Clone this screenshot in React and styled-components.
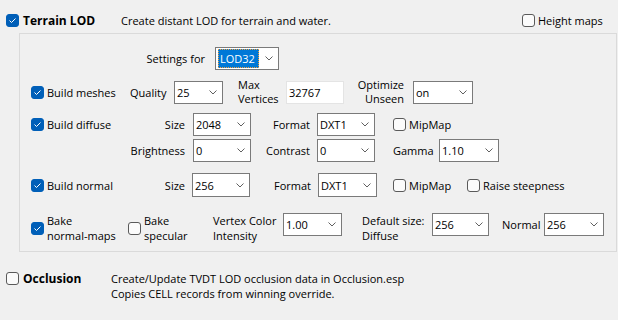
import React from "react";
import styled, { createGlobalStyle } from "styled-components";

const GlobalStyle = createGlobalStyle`
  html, body {
    margin: 0;
    padding: 0;
    background: #f0f0f0;
  }
  body {
    width: 618px;
    height: 320px;
    overflow: hidden;
    font-family: "Open Sans", "Noto Sans", sans-serif;
    font-size: 11px;
    color: #000;
  }
`;

const Page = styled.div`
  padding-top: 13px;
`;

const Row = styled.div`
  display: flex;
  align-items: ${({ $align }) => $align || "center"};
  height: ${({ $h }) => ($h ? `${$h}px` : "auto")};
  margin-top: ${({ $mt }) => $mt || 0}px;
  padding-left: ${({ $pl }) => $pl || 0}px;
`;

const Cap = styled.span`
  flex: none;
  box-sizing: border-box;
  width: ${({ $w }) => ($w ? `${$w}px` : "auto")};
  margin-left: ${({ $ml }) => $ml || 0}px;
  padding-right: ${({ $pr }) => $pr || 0}px;
  text-align: ${({ $right }) => ($right ? "right" : "left")};
  line-height: ${({ $lh }) => $lh || 15}px;
  align-self: ${({ $self }) => $self || "auto"};
  white-space: nowrap;
`;

const Panel = styled.div`
  box-sizing: border-box;
  width: 598px;
  height: 219px;
  margin: 6px 0 0 19px;
  border: 1px solid #dadada;
`;

const CheckWrap = styled.label`
  flex: none;
  display: flex;
  align-items: center;
  gap: ${({ $bold }) => ($bold ? 4 : 3)}px;
  width: ${({ $w }) => ($w ? `${$w}px` : "auto")};
  margin-left: ${({ $ml }) => $ml || 0}px;
  font-weight: ${({ $bold }) => ($bold ? 700 : 400)};
  font-size: ${({ $bold }) => ($bold ? 12 : 11)}px;
  line-height: 15px;
  white-space: nowrap;
`;

const Box = styled.span`
  flex: none;
  box-sizing: border-box;
  width: 13px;
  height: 13px;
  border-radius: 3px;
  border: 1px solid ${({ $on }) => ($on ? "#005fb8" : "#5a5a5a")};
  background: ${({ $on }) => ($on ? "#005fb8" : "#fbfbfb")};
  display: flex;
  align-items: center;
  justify-content: center;
`;

const Check = ({ on, bold, w, ml, children }) => (
  <CheckWrap $bold={bold} $w={w} $ml={ml}>
    <Box $on={on}>
      {on && (
        <svg width="9" height="7" viewBox="0 0 9 7">
          <path d="M1.5 3.5 L3.5 5.5 L7.5 1.5" fill="none" stroke="#fff" strokeWidth="1" />
        </svg>
      )}
    </Box>
    <span>{children}</span>
  </CheckWrap>
);

const ComboBox = styled.div`
  flex: none;
  box-sizing: border-box;
  width: ${({ $w }) => $w}px;
  height: ${({ $h }) => $h || 23}px;
  margin-left: ${({ $ml }) => $ml || 0}px;
  border: 1px solid #7a7a7a;
  background: #fff;
  display: flex;
  align-items: center;
  padding: 0 5px 0 2px;
`;

const ComboValue = styled.span`
  flex: 1;
  line-height: 15px;
  white-space: nowrap;
`;

const Highlight = styled.span`
  box-sizing: border-box;
  display: inline-flex;
  align-items: center;
  width: 41px;
  height: 19px;
  padding-left: 1px;
  background: #0078d7;
  color: #fff;
  border: 1px dotted #f0a040;
`;

const Combo = ({ w, h, ml, value, selected }) => (
  <ComboBox $w={w} $h={h} $ml={ml}>
    <ComboValue>{selected ? <Highlight>{value}</Highlight> : value}</ComboValue>
    <svg width="8" height="5" viewBox="0 0 8 5">
      <path d="M0.5 0.5 L4 4 L7.5 0.5" fill="none" stroke="#606060" strokeWidth="1" />
    </svg>
  </ComboBox>
);

const TextBox = styled.div`
  flex: none;
  box-sizing: border-box;
  width: ${({ $w }) => $w}px;
  height: 23px;
  padding-left: 2px;
  background: #fff;
  border: 1px solid #e4e4e4;
  display: flex;
  align-items: center;
`;

export default function App() {
  return (
    <>
      <GlobalStyle />
      <Page>
        <Row $h={14} $pl={6}>
          <Check on bold w={115}>Terrain LOD</Check>
          <Cap $w={401}>Create distant LOD for terrain and water.</Cap>
          <Check>Height maps</Check>
        </Row>

        <Panel>
          <Row $h={23} $mt={13}>
            <Cap $w={195} $right $pr={10}>Settings for</Cap>
            <Combo w={64} value="LOD32" selected />
          </Row>

          <Row $h={28} $mt={8} $pl={11}>
            <Check on w={99}>Build meshes</Check>
            <Cap $w={44}>Quality</Cap>
            <Combo w={49} value="25" />
            <Cap $w={48} $ml={15} $lh={14}>
              Max
              <br />
              Vertices
            </Cap>
            <TextBox $w={58}>32767</TextBox>
            <Cap $w={69} $right $pr={9} $lh={14}>
              Optimize
              <br />
              Unseen
            </Cap>
            <Combo w={60} value="on" />
          </Row>

          <Row $h={23} $mt={7} $pl={11}>
            <Check on w={99}>Build diffuse</Check>
            <Cap $w={63} $right $pr={8}>Size</Cap>
            <Combo w={58} value="2048" />
            <Cap $w={66} $right $pr={7}>Format</Cap>
            <Combo w={58} value="DXT1" />
            <Check ml={18}>MipMap</Check>
          </Row>

          <Row $h={23} $mt={3} $pl={110}>
            <Cap $w={63} $right $pr={8}>Brightness</Cap>
            <Combo w={58} value="0" />
            <Cap $w={66} $right $pr={7}>Contrast</Cap>
            <Combo w={58} value="0" />
            <Cap $w={46} $ml={18}>Gamma</Cap>
            <Combo w={60} value="1.10" />
          </Row>

          <Row $h={24} $mt={11} $pl={11}>
            <Check on w={99}>Build normal</Check>
            <Cap $w={62} $right $pr={7}>Size</Cap>
            <Combo w={58} h={24} value="256" />
            <Cap $w={68} $right $pr={7}>Format</Cap>
            <Combo w={59} h={24} value="DXT1" />
            <Check ml={16} w={74}>MipMap</Check>
            <Check>Raise steepness</Check>
          </Row>

          <Row $h={30} $mt={16} $pl={11} $align="flex-start">
            <Check on w={97}>
              Bake
              <br />
              normal-maps
            </Check>
            <Check w={85}>
              Bake
              <br />
              specular
            </Check>
            <Cap $w={70}>
              Vertex Color
              <br />
              Intensity
            </Cap>
            <Combo w={59} value="1.00" />
            <Cap $w={70} $ml={20}>
              Default size:
              <br />
              Diffuse
            </Cap>
            <Combo w={57} value="256" />
            <Cap $w={42} $ml={13} $lh={23}>Normal</Cap>
            <Combo w={60} value="256" />
          </Row>
        </Panel>

        <Row $mt={19} $pl={6} $align="flex-start">
          <Check bold w={105}>Occlusion</Check>
          <Cap>
            Create/Update TVDT LOD occlusion data in Occlusion.esp
            <br />
            Copies CELL records from winning override.
          </Cap>
        </Row>
      </Page>
    </>
  );
}
